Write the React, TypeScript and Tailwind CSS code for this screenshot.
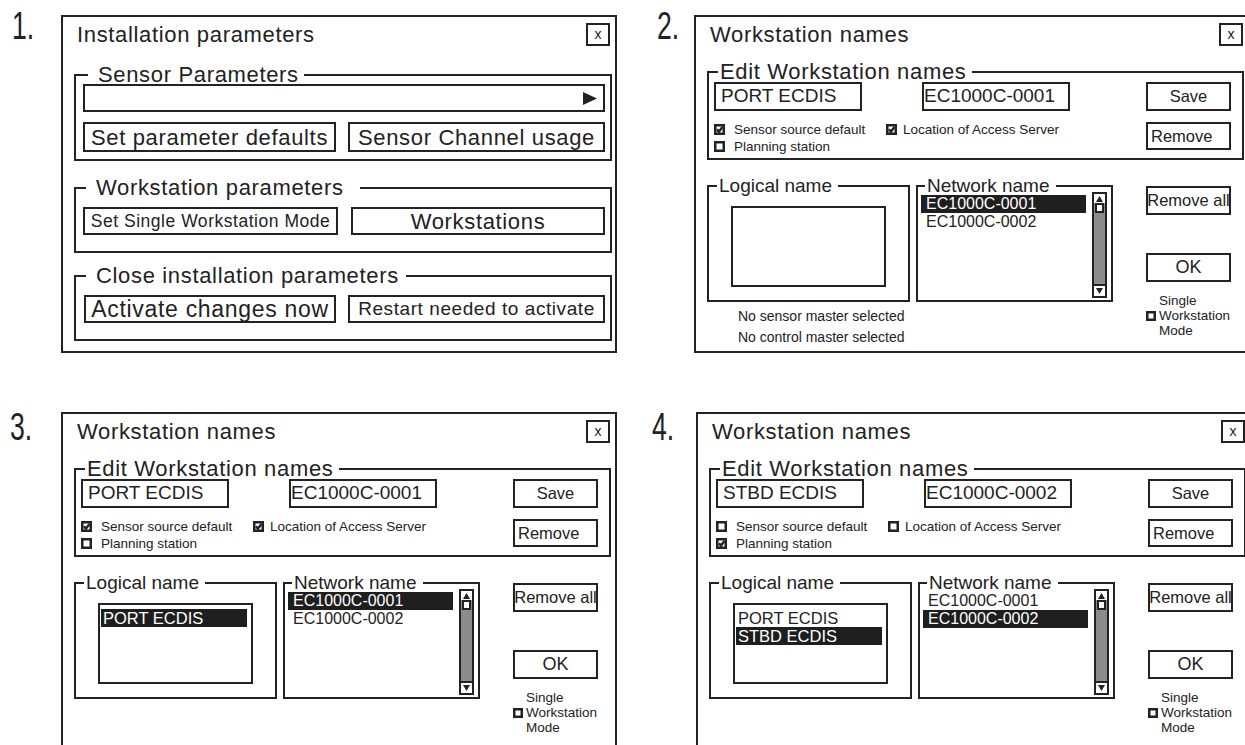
import React from "react";

function Check({ on }: { on: boolean }) {
    return (
        <svg width="11" height="11" viewBox="0 0 11 11" className="shrink-0">
            <rect x="1.25" y="1.25" width="8.5" height="8.5" fill="white" stroke="#222" strokeWidth="2.5" />
            {on && <path d="M3 5.3 L4.9 7.7 L8.4 3" fill="none" stroke="#222" strokeWidth="2.4" />}
        </svg>
    );
}

function Btn({ className = "", children }: { className?: string; children: React.ReactNode }) {
    return (
        <div className={`flex items-center border-2 border-[#222] whitespace-nowrap ${className}`}>
            {children}
        </div>
    );
}

function Group({ label, className = "", legendCls = "", children }: { label: string; className?: string; legendCls?: string; children: React.ReactNode }) {
    return (
        <fieldset className={`shrink-0 border-2 border-[#222] ${className}`}>
            <legend className={`leading-[14px] whitespace-nowrap ${legendCls}`}>{label}</legend>
            {children}
        </fieldset>
    );
}

function TitleRow({ title }: { title: string }) {
    return (
        <div className="flex items-start justify-between pt-[6px] pl-[14px] pr-[5px]">
            <div className="text-[22px] leading-[24px] tracking-[0.03em]">{title}</div>
            <div className="w-[24px] h-[23px] border-2 border-[#222] flex items-center justify-center text-[14px] leading-none pb-[2px]">x</div>
        </div>
    );
}

function Label({ n, className = "" }: { n: string; className?: string }) {
    return (
        <div className={`shrink-0 ${className}`}>
            <span className="inline-block origin-left scale-x-[0.7] text-[38px] leading-[38px]">{n}</span>
        </div>
    );
}

function Scrollbar() {
    return (
        <div className="w-[15px] -mt-[1px] mb-[2px] ml-[6px] border-2 border-[#222] bg-[#8c8c8c] flex flex-col">
            <div className="h-[9px] bg-white flex items-center justify-center">
                <svg width="7" height="6" viewBox="0 0 7 6"><path d="M3.5 0 L7 6 L0 6 Z" fill="#222" /></svg>
            </div>
            <div className="mx-auto w-[9px] h-[10px] border-2 border-[#222] bg-white" />
            <div className="flex-1" />
            <div className="h-[12px] bg-white border-t-2 border-[#222] flex items-center justify-center">
                <svg width="7" height="6" viewBox="0 0 7 6"><path d="M0 0 L7 0 L3.5 6 Z" fill="#222" /></svg>
            </div>
        </div>
    );
}

function InstallPanel() {
    return (
        <div className="w-[556px] h-[338px] shrink-0 border-2 border-[#222] flex flex-col">
            <TitleRow title="Installation parameters" />
            <Group label="Sensor Parameters" className="mt-[21px] ml-[11px] w-[538px]" legendCls="text-[22px] tracking-[0.03em] ml-[12px] pl-[10px] pr-[5px]">
                <div className="flex flex-col gap-[10px] pl-[7px] pr-[5px] pt-[2px] pb-[7px]">
                    <div className="h-[28px] border-2 border-[#222] flex items-center justify-end pr-[6px]">
                        <svg width="14" height="13" viewBox="0 0 14 13"><path d="M0 0 L14 6.5 L0 13 Z" fill="#222" /></svg>
                    </div>
                    <div className="flex gap-[12px] text-[22px] tracking-[0.03em]">
                        <Btn className="w-[253px] h-[30px] justify-center">Set parameter defaults</Btn>
                        <Btn className="flex-1 h-[30px] justify-center">Sensor Channel usage</Btn>
                    </div>
                </div>
            </Group>
            <Group label="Workstation parameters" className="mt-[20px] ml-[11px] w-[538px]" legendCls="text-[22px] tracking-[0.03em] ml-[10px] pl-[10px] pr-[16px]">
                <div className="flex gap-[13px] pl-[7px] pr-[5px] pt-[12px] pb-[16px]">
                    <Btn className="w-[255px] h-[28px] justify-center text-[17.5px] tracking-[0.03em]">Set Single Workstation Mode</Btn>
                    <Btn className="flex-1 h-[28px] justify-center text-[22px] tracking-[0.03em]">Workstations</Btn>
                </div>
            </Group>
            <Group label="Close installation parameters" className="mt-[16px] ml-[11px] w-[538px]" legendCls="text-[22px] tracking-[0.03em] ml-[10px] pl-[10px] pr-[7px]">
                <div className="flex gap-[12px] pl-[8px] pr-[5px] pt-[12px] pb-[16px]">
                    <Btn className="w-[252px] h-[28px] justify-center text-[23px] tracking-[0.03em]">Activate changes now</Btn>
                    <Btn className="flex-1 h-[28px] justify-center text-[19px] tracking-[0.03em]">Restart needed to activate</Btn>
                </div>
            </Group>
        </div>
    );
}

type WsProps = {
    name: string;
    net: string;
    checks: [boolean, boolean, boolean];
    logical: string[];
    logicalSel: number;
    netSel: number;
    status?: boolean;
};

function WorkstationPanel({ name, net, checks, logical, logicalSel, netSel, status }: WsProps) {
    const nets = ["EC1000C-0001", "EC1000C-0002"];
    return (
        <div className="w-[556px] h-[338px] shrink-0 border-2 border-[#222] flex flex-col">
            <TitleRow title="Workstation names" />
            <Group label="Edit Workstation names" className="mt-[18px] ml-[11px] w-[537px]" legendCls="text-[22px] tracking-[0.03em] ml-[9px] pl-[2px] pr-[6px]">
                <div className="flex pl-[5px] pt-[3px] pb-[3px]">
                    <div className="w-[356px] flex flex-col">
                        <div className="flex justify-between text-[19px]">
                            <div className="w-[148px] h-[29px] border-2 border-[#222] flex items-center pl-[5px]">{name}</div>
                            <div className="w-[148px] h-[29px] border-2 border-[#222] flex items-center">{net}</div>
                        </div>
                        <div className="mt-[10px] text-[13.5px] leading-[17px]">
                            <div className="flex items-center">
                                <span className="w-[172px] flex items-center gap-[9px]"><Check on={checks[0]} />Sensor source default</span>
                                <span className="flex items-center gap-[6px]"><Check on={checks[1]} />Location of Access Server</span>
                            </div>
                            <div className="flex items-center gap-[9px]"><Check on={checks[2]} />Planning station</div>
                        </div>
                    </div>
                    <div className="ml-[76px] w-[85px] flex flex-col gap-[11px] text-[16.5px]">
                        <Btn className="h-[29px] justify-center">Save</Btn>
                        <Btn className="h-[28px] pl-[3px]">Remove</Btn>
                    </div>
                </div>
            </Group>
            <div className="flex mt-[19px] ml-[11px]">
                <div className="flex flex-col">
                    <div className="flex gap-[6px]">
                        <Group label="Logical name" className="w-[203px] h-[123px]" legendCls="text-[19px] ml-[8px] pl-[2px] pr-[6px]">
                            <div className="mx-auto mt-[13px] w-[155px] h-[81px] border-2 border-[#222] pt-[4px] pl-[1px] pr-[4px] text-[16.5px]">
                                {logical.map((l, i) => (
                                    <div key={l} className={`h-[18px] leading-[18px] pl-[2px] ${i === logicalSel ? "bg-[#1e1e1e] text-white" : ""}`}>{l}</div>
                                ))}
                            </div>
                        </Group>
                        <Group label="Network name" className="w-[197px] h-[123px]" legendCls="text-[19px] ml-[7px] pl-[2px] pr-[6px]">
                            <div className="flex h-[107px] pl-[3px] pr-[4px]">
                                <div className="flex-1 pt-[2px] text-[16px]">
                                    {nets.map((n, i) => (
                                        <div key={n} className={`h-[18px] leading-[18px] pl-[5px] ${i === netSel ? "bg-[#1e1e1e] text-white" : ""}`}>{n}</div>
                                    ))}
                                </div>
                                <Scrollbar />
                            </div>
                        </Group>
                    </div>
                    {status && (
                        <div className="mt-[4px] pl-[31px] text-[14px] leading-[21px]">
                            <div>No sensor master selected</div>
                            <div>No control master selected</div>
                        </div>
                    )}
                </div>
                <div className="ml-[33px] w-[85px] flex flex-col">
                    <Btn className="mt-[7px] h-[29px] justify-center text-[16.5px]">Remove all</Btn>
                    <Btn className="mt-[38px] h-[29px] justify-center text-[18px]">OK</Btn>
                    <div className="mt-[11px] flex items-center gap-[3px] text-[13.5px] leading-[15px]">
                        <svg width="10" height="10" viewBox="0 0 10 10" className="shrink-0">
                            <rect x="1.25" y="1.25" width="7.5" height="7.5" fill="white" stroke="#222" strokeWidth="2.5" />
                        </svg>
                        <div>
                            <div>Single</div>
                            <div>Workstation</div>
                            <div>Mode</div>
                        </div>
                    </div>
                </div>
            </div>
        </div>
    );
}

export default function App() {
    return (
        <div className="w-[1245px] h-[745px] overflow-hidden bg-white text-[#222] font-['Liberation_Sans',Arial,sans-serif]">
            <div className="flex pt-[15px]">
                <Label n="1." className="w-[61px] pl-[12px] -mt-[8px]" />
                <InstallPanel />
                <Label n="2." className="w-[77px] pl-[40px] -mt-[8px]" />
                <WorkstationPanel
                    name="PORT ECDIS"
                    net="EC1000C-0001"
                    checks={[true, true, false]}
                    logical={[]}
                    logicalSel={-1}
                    netSel={0}
                    status
                />
            </div>
            <div className="flex mt-[59px]">
                <Label n="3." className="w-[61px] pl-[10px] -mt-[4px]" />
                <WorkstationPanel
                    name="PORT ECDIS"
                    net="EC1000C-0001"
                    checks={[true, true, false]}
                    logical={["PORT ECDIS"]}
                    logicalSel={0}
                    netSel={0}
                />
                <Label n="4." className="w-[79px] pl-[35px] -mt-[4px]" />
                <WorkstationPanel
                    name="STBD ECDIS"
                    net="EC1000C-0002"
                    checks={[false, false, true]}
                    logical={["PORT ECDIS", "STBD ECDIS"]}
                    logicalSel={1}
                    netSel={1}
                />
            </div>
        </div>
    );
}
